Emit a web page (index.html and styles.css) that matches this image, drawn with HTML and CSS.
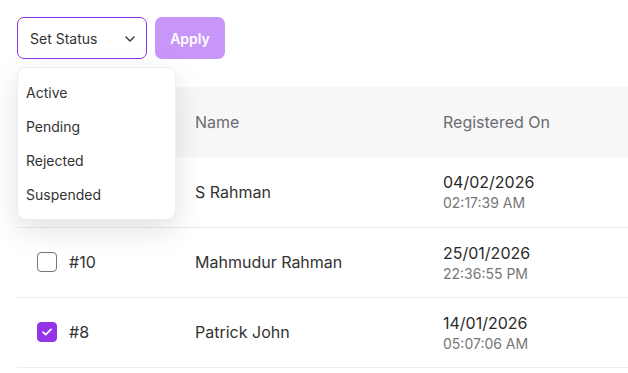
FILE: index.html
```html
<!DOCTYPE html>
<html lang="en">
<head>
    <meta charset="UTF-8">
    <meta name="viewport" content="width=device-width, initial-scale=1.0">
    <title>Users</title>
    <link rel="stylesheet" href="styles.css">
</head>
<body>
    <div class="container">
        <div class="toolbar">
            <div class="select-wrap">
                <div class="select">
                    <span>Set Status</span>
                    <svg class="chevron" width="10" height="6" viewBox="0 0 10 6"><path d="M1 1l4 4 4-4" fill="none" stroke="#333" stroke-width="1.4" stroke-linecap="round" stroke-linejoin="round"/></svg>
                </div>
                <div class="menu">
                    <div class="menu-item">Active</div>
                    <div class="menu-item">Pending</div>
                    <div class="menu-item">Rejected</div>
                    <div class="menu-item">Suspended</div>
                </div>
            </div>
            <button class="btn-apply">Apply</button>
        </div>

        <table class="users">
            <thead>
                <tr>
                    <th class="col-id"><span class="check-cell"><span class="checkbox"></span></span></th>
                    <th class="col-name">Name</th>
                    <th>Registered On</th>
                </tr>
            </thead>
            <tbody>
                <tr>
                    <td class="col-id"><span class="check-cell"><span class="checkbox"></span></span></td>
                    <td class="col-name">S Rahman</td>
                    <td><div class="date">04/02/2026</div><div class="time">02:17:39 AM</div></td>
                </tr>
                <tr>
                    <td class="col-id"><span class="check-cell"><span class="checkbox"></span>#10</span></td>
                    <td class="col-name">Mahmudur Rahman</td>
                    <td><div class="date">25/01/2026</div><div class="time">22:36:55 PM</div></td>
                </tr>
                <tr>
                    <td class="col-id"><span class="check-cell"><span class="checkbox checked"><svg width="12" height="10" viewBox="0 0 12 10"><path d="M2 5.2l2.6 2.4L10 2.4" fill="none" stroke="#fff" stroke-width="1.8" stroke-linecap="round" stroke-linejoin="round"/></svg></span>#8</span></td>
                    <td class="col-name">Patrick John</td>
                    <td><div class="date">14/01/2026</div><div class="time">05:07:06 AM</div></td>
                </tr>
            </tbody>
        </table>
    </div>
</body>
</html>
```

FILE: styles.css
```css
* { margin: 0; padding: 0; box-sizing: border-box; }
body {
    font-family: Inter, "Noto Sans", sans-serif;
    background: #fff;
    color: #333;
    overflow: hidden;
}
.container { padding: 17px 0 0 17px; }
.toolbar {
    display: flex;
    gap: 8px;
    margin-bottom: 28px;
}
.select-wrap { position: relative; }
.select {
    width: 130px;
    height: 42px;
    border: 1px solid #9333ea;
    border-radius: 7px;
    display: flex;
    align-items: center;
    justify-content: space-between;
    padding: 0 11px 0 12px;
    font-size: 14px;
    color: #333;
}
.chevron { margin-top: 1px; }
.menu {
    position: absolute;
    top: 50px;
    left: 0;
    width: 159px;
    height: 153px;
    background: #fff;
    border: 1px solid #eeeaf7;
    border-radius: 9px;
    box-shadow: 0 10px 30px rgba(0,0,0,0.12);
    padding-top: 8px;
    z-index: 10;
}
.menu-item {
    height: 34px;
    line-height: 34px;
    padding-left: 8px;
    font-size: 14px;
    color: #333;
}
.btn-apply {
    width: 70px;
    height: 42px;
    border: none;
    border-radius: 7px;
    background: #c896f9;
    color: #fff;
    font-family: inherit;
    font-size: 14px;
    font-weight: 600;
}
.users {
    width: 100%;
    border-collapse: collapse;
}
.users th {
    background: #f7f7f7;
    height: 70px;
    text-align: left;
    font-weight: 400;
    font-size: 16px;
    color: #6b6b73;
    padding: 0 20px;
}
.users td {
    height: 70px;
    padding: 0 20px;
    font-size: 16px;
    color: #333;
    border-bottom: 1px solid #ededed;
}
.col-id { width: 158px; }
.col-name { width: 248px; }
.check-cell {
    display: flex;
    align-items: center;
    gap: 12px;
}
.checkbox {
    width: 20px;
    height: 20px;
    border: 1.5px solid #777;
    border-radius: 4px;
    display: flex;
    align-items: center;
    justify-content: center;
}
.checkbox.checked {
    background: #9333ea;
    border-color: #9333ea;
}
.date { font-size: 16px; color: #2a2a2a; line-height: 22px; padding-top: 1px; }
.time { font-size: 14px; color: #777; line-height: 20px; }
```
